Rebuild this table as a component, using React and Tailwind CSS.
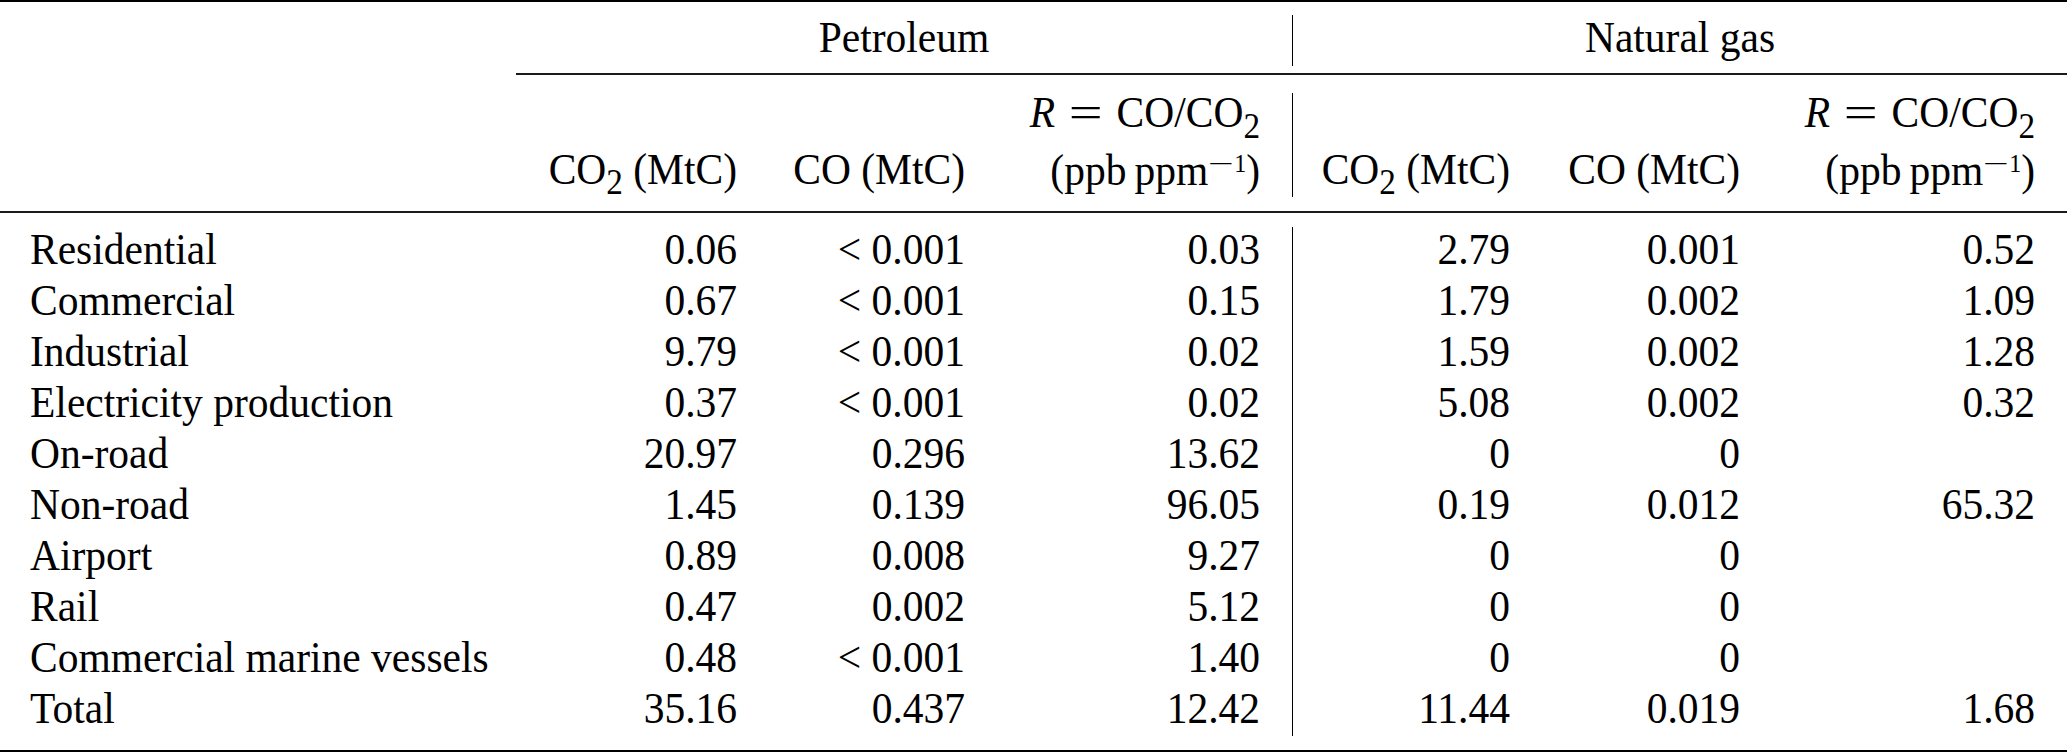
import React from "react";

const rows = [
  ["Residential", "0.06", "< 0.001", "0.03", "2.79", "0.001", "0.52"],
  ["Commercial", "0.67", "< 0.001", "0.15", "1.79", "0.002", "1.09"],
  ["Industrial", "9.79", "< 0.001", "0.02", "1.59", "0.002", "1.28"],
  ["Electricity production", "0.37", "< 0.001", "0.02", "5.08", "0.002", "0.32"],
  ["On-road", "20.97", "0.296", "13.62", "0", "0", ""],
  ["Non-road", "1.45", "0.139", "96.05", "0.19", "0.012", "65.32"],
  ["Airport", "0.89", "0.008", "9.27", "0", "0", ""],
  ["Rail", "0.47", "0.002", "5.12", "0", "0", ""],
  ["Commercial marine vessels", "0.48", "< 0.001", "1.40", "0", "0", ""],
  ["Total", "35.16", "0.437", "12.42", "11.44", "0.019", "1.68"],
];

function Sub({ children }) {
  return (
    <span className="relative top-[0.3em] text-[0.8em] leading-none">{children}</span>
  );
}

function Sup() {
  return (
    <span className="relative top-[-0.48em] text-[24px] leading-none">
      <span className="inline-block w-[26px] text-center">
        <span className="inline-block scale-x-[1.9]">−</span>
      </span>
      1
    </span>
  );
}

function Co2() {
  return (
    <span>
      CO<Sub>2</Sub>
    </span>
  );
}

function RHeader() {
  return (
    <div className="flex flex-col items-end scale-y-[1.05]">
      <div className="leading-[55px] whitespace-nowrap">
        <span className="italic">R</span>
        <span className="inline-block mx-[19px] scale-x-[1.45]">=</span>CO/CO<Sub>2</Sub>
      </div>
      <div className="leading-[55px] whitespace-nowrap">
        (ppb<span className="ml-[8px]">ppm</span>
        <Sup />)
      </div>
    </div>
  );
}

function Rule({ className = "" }) {
  return <div className={"h-[2px] bg-black " + className} />;
}

const num = "text-right leading-[51px] whitespace-nowrap scale-y-[1.05]";

export default function App() {
  return (
    <div className="w-[2067px] h-[753px] overflow-hidden bg-white text-black font-['Liberation_Serif',serif] text-[41.5px] leading-none">
      {/* top rule */}
      <Rule />

      {/* header row 1 */}
      <div className="flex h-[71px]">
        <div className="w-[516px]" />
        <div className="w-[776px] text-center leading-[71px] scale-y-[1.05]">Petroleum</div>
        <div className="w-px bg-black mt-[13px] mb-[7px]" />
        <div className="w-[774px] text-center leading-[71px] scale-y-[1.05]">Natural gas</div>
      </div>

      {/* cmidrule */}
      <div className="flex">
        <div className="w-[516px]" />
        <div className="flex-1 h-[2px] bg-[#1a1a1a]" />
      </div>

      {/* header row 2 */}
      <div className="flex h-[136px]">
        <div className="grid grid-cols-[516px_252px_228px_296px] items-end pb-[14.5px]">
          <div />
          <div className="text-right pr-[31px] leading-[55px] whitespace-nowrap scale-y-[1.05]">
            <Co2 /> (MtC)
          </div>
          <div className="text-right pr-[31px] leading-[55px] whitespace-nowrap scale-y-[1.05]">
            CO (MtC)
          </div>
          <div className="pr-[32px]">
            <RHeader />
          </div>
        </div>
        <div className="w-px bg-black mt-[18px] mb-[14px]" />
        <div className="grid grid-cols-[248px_230px_296px] items-end pb-[14.5px]">
          <div className="text-right pr-[31px] leading-[55px] whitespace-nowrap scale-y-[1.05]">
            <Co2 /> (MtC)
          </div>
          <div className="text-right pr-[31px] leading-[55px] whitespace-nowrap scale-y-[1.05]">
            CO (MtC)
          </div>
          <div className="pr-[32px]">
            <RHeader />
          </div>
        </div>
      </div>

      {/* midrule */}
      <div className="h-[2px] bg-[#1a1a1a]" />

      {/* body */}
      <div className="flex h-[537px]">
        <div className="grid grid-cols-[516px_252px_228px_296px] auto-rows-[51px] content-start pt-[10.5px]">
          {rows.map((r) => (
            <React.Fragment key={r[0]}>
              <div className="pl-[30px] leading-[51px] whitespace-nowrap scale-y-[1.05]">{r[0]}</div>
              <div className={num + " pr-[31px]"}>{r[1]}</div>
              <div className={num + " pr-[31px]"}>{r[2]}</div>
              <div className={num + " pr-[32px]"}>{r[3]}</div>
            </React.Fragment>
          ))}
        </div>
        <div className="w-px bg-black mt-[14px] mb-[14px]" />
        <div className="grid grid-cols-[248px_230px_296px] auto-rows-[51px] content-start pt-[10.5px]">
          {rows.map((r) => (
            <React.Fragment key={r[0]}>
              <div className={num + " pr-[31px]"}>{r[4]}</div>
              <div className={num + " pr-[31px]"}>{r[5]}</div>
              <div className={num + " pr-[32px]"}>{r[6]}</div>
            </React.Fragment>
          ))}
        </div>
      </div>

      {/* bottom rule */}
      <Rule />
    </div>
  );
}
